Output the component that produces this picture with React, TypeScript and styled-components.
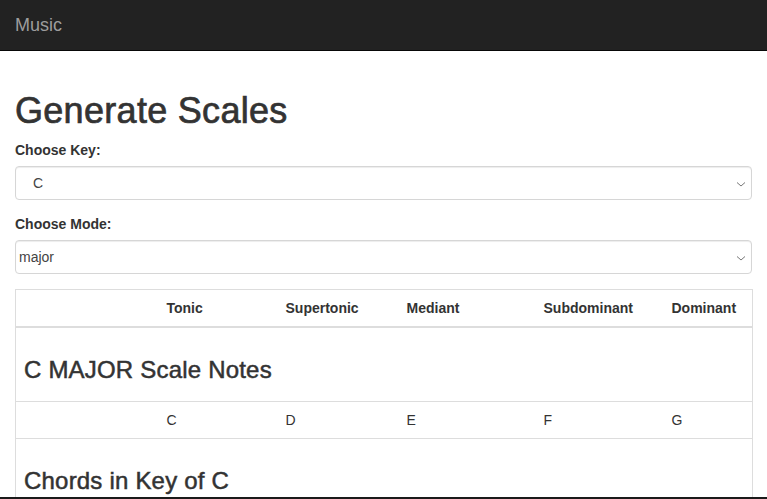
import React from "react";
import styled, { createGlobalStyle } from "styled-components";

const Global = createGlobalStyle`
  html, body { margin: 0; padding: 0; }
  body {
    font-family: "Liberation Sans", Arial, Helvetica, sans-serif;
    font-size: 14px;
    line-height: 1.42857;
    color: #333;
    background: #fff;
  }
  * { box-sizing: border-box; }
`;

const Navbar = styled.nav`
  height: 51px;
  background: #222;
  border-bottom: 1px solid #080808;
  margin-bottom: 20px;
  display: flex;
  align-items: flex-start;
`;

const Brand = styled.a`
  padding: 15px;
  font-size: 18px;
  line-height: 20px;
  color: #9d9d9d;
  text-decoration: none;
`;

const Container = styled.main`
  padding: 20px 15px 40px;
`;

const Title = styled.h1`
  font-size: 36px;
  font-weight: 500;
  line-height: 1.1;
  margin: 0 0 10px;
  letter-spacing: 0.3px;
  -webkit-text-stroke: 0.7px #333;
`;

const FormGroup = styled.div`
  margin-bottom: 15px;
`;

const Label = styled.label`
  display: block;
  font-weight: bold;
  margin-bottom: 5px;
`;

const SelectWrap = styled.div`
  position: relative;
`;

const Select = styled.select<{ $indent: number }>`
  display: block;
  width: 100%;
  height: 34px;
  padding: 6px 12px 6px ${(p) => p.$indent}px;
  font-family: inherit;
  font-size: 14px;
  color: #444;
  background: #fff;
  border: 1px solid #d6d6d6;
  border-radius: 4px;
  box-shadow: inset 0 1px 1px rgba(0, 0, 0, 0.075);
  appearance: none;
  -webkit-appearance: none;
  outline: none;
`;

const Chevron = styled.svg`
  position: absolute;
  right: 4px;
  top: 14px;
  pointer-events: none;
`;

const Table = styled.table`
  width: 100%;
  border-collapse: collapse;
  table-layout: fixed;
  border: 1px solid #ddd;
`;

const Th = styled.th`
  text-align: left;
  padding: 8px;
  line-height: 20px;
  font-weight: bold;
  border-bottom: 2px solid #ddd;
`;

const Td = styled.td`
  padding: 8px;
  line-height: 20px;
  border-top: 1px solid #ddd;
`;

const SectionTitle = styled.h3`
  font-size: 24px;
  font-weight: 500;
  line-height: 1.1;
  margin: 21px 0 10px;
  letter-spacing: 0.2px;
  -webkit-text-stroke: 0.5px #333;
`;

const BottomEdge = styled.div`
  position: fixed;
  left: 0;
  right: 0;
  bottom: 0;
  height: 2px;
  background: #1a1a1a;
`;

const degrees = ["Tonic", "Supertonic", "Mediant", "Subdominant", "Dominant"];
const notes = ["C", "D", "E", "F", "G"];
const chords = ["C", "Dm", "Em", "F", "G"];
const colWidths = [143, 119, 121, 137, 128, 89];

function Dropdown({ value, options, indent }: { value: string; options: string[]; indent: number }) {
  return (
    <SelectWrap>
      <Select $indent={indent} defaultValue={value}>
        {options.map((o) => (
          <option key={o}>{o}</option>
        ))}
      </Select>
      <Chevron width="14" height="8" viewBox="0 0 14 8">
        <path d="M3 2.5 L7 6 L11 2.5" fill="none" stroke="#777" strokeWidth="1" />
      </Chevron>
    </SelectWrap>
  );
}

export default function App() {
  return (
    <>
      <Global />
      <Navbar>
        <Brand href="#">Music</Brand>
      </Navbar>
      <Container>
        <Title>Generate Scales</Title>
        <FormGroup>
          <Label>Choose Key:</Label>
          <Dropdown value="C" options={["C", "D", "E", "F", "G", "A", "B"]} indent={17} />
        </FormGroup>
        <FormGroup>
          <Label>Choose Mode:</Label>
          <Dropdown value="major" options={["major", "minor"]} indent={3} />
        </FormGroup>
        <Table>
          <colgroup>
            {colWidths.map((w, i) => (
              <col key={i} style={{ width: w }} />
            ))}
          </colgroup>
          <thead>
            <tr>
              <Th />
              {degrees.map((d) => (
                <Th key={d}>{d}</Th>
              ))}
            </tr>
          </thead>
          <tbody>
            <tr>
              <Td colSpan={6}>
                <SectionTitle>C MAJOR Scale Notes</SectionTitle>
              </Td>
            </tr>
            <tr>
              <Td />
              {notes.map((n) => (
                <Td key={n}>{n}</Td>
              ))}
            </tr>
            <tr>
              <Td colSpan={6}>
                <SectionTitle>Chords in Key of C</SectionTitle>
              </Td>
            </tr>
            <tr>
              <Td />
              {chords.map((n) => (
                <Td key={n}>{n}</Td>
              ))}
            </tr>
          </tbody>
        </Table>
      </Container>
      <BottomEdge />
    </>
  );
}
